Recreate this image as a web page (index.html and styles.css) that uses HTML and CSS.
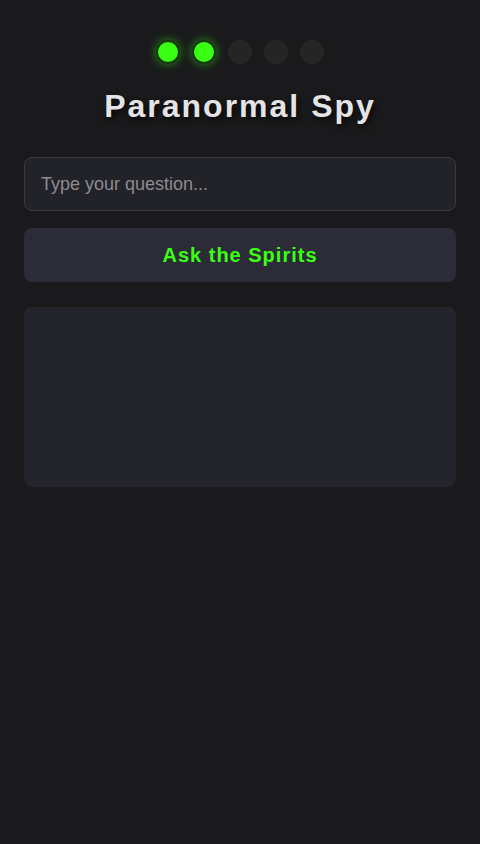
FILE: index.html
```html
<!DOCTYPE html>
<html lang="en">
<head>
<meta charset="utf-8">
<meta name="viewport" content="width=device-width, initial-scale=1">
<title>Paranormal Spy</title>
<link rel="stylesheet" href="styles.css">
</head>
<body>
<main class="app">
  <div class="dots">
    <span class="dot on"></span>
    <span class="dot on"></span>
    <span class="dot"></span>
    <span class="dot"></span>
    <span class="dot"></span>
  </div>
  <h1 class="title">Paranormal Spy</h1>
  <input class="question" type="text" placeholder="Type your question...">
  <button class="ask" type="button">Ask the Spirits</button>
  <div class="response"></div>
</main>
</body>
</html>
```
FILE: styles.css
```css
* { box-sizing: border-box; }
html, body {
  margin: 0;
  padding: 0;
  background: #1a1a1c;
  font-family: "Liberation Sans", Arial, sans-serif;
}
.app {
  display: flex;
  flex-direction: column;
  padding: 40px 24px 24px;
}
.dots {
  display: flex;
  justify-content: center;
  gap: 12px;
}
.dot {
  width: 24px;
  height: 24px;
  border-radius: 50%;
  background: #252526;
  border: 1px solid #2a2a2b;
}
.dot.on {
  background: #39ff14;
  border: 2px solid #163a10;
  box-shadow: 0 0 10px rgba(57, 255, 20, 0.5);
}
.title {
  margin: 24px 0 32px;
  text-align: center;
  font-size: 32px;
  line-height: 37px;
  font-weight: 700;
  letter-spacing: 2px;
  color: #e4e4e6;
  text-shadow: 2px 3px 6px rgba(0, 0, 0, 0.8);
}
.question {
  height: 54px;
  width: 100%;
  padding: 0 16px;
  background: #222229;
  border: 1px solid #38383f;
  border-radius: 8px;
  color: #e0e0e0;
  font-family: "Liberation Sans", Arial, sans-serif;
  font-size: 18px;
  outline: none;
}
.question::placeholder { color: #8c8c90; }
.ask {
  margin-top: 17px;
  height: 54px;
  width: 100%;
  background: #2c2c38;
  border: none;
  border-radius: 8px;
  color: #39ff14;
  font-family: "Liberation Sans", Arial, sans-serif;
  font-size: 20px;
  font-weight: 700;
  letter-spacing: 1px;
}
.response {
  margin-top: 25px;
  height: 180px;
  background: #24242d;
  border-radius: 8px;
}
```
